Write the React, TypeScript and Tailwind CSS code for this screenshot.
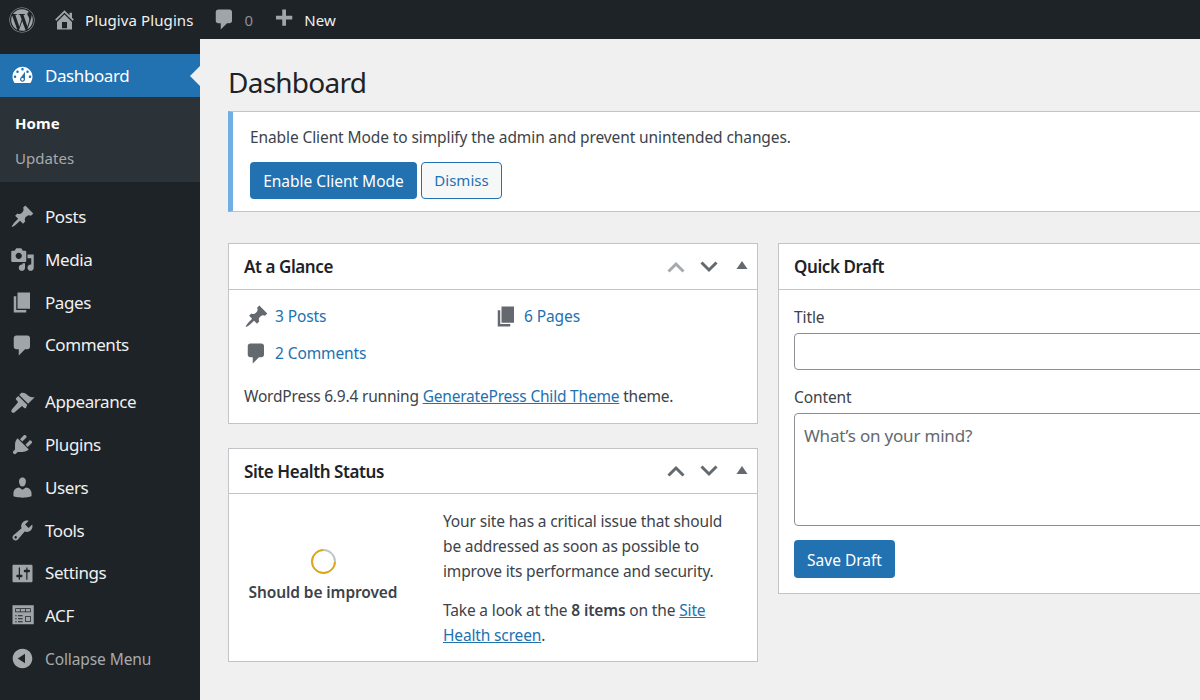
import React from "react";
import { FaWordpress } from "react-icons/fa";

const P = {
  pin: "M10.44 3.02l1.82-1.82 6.36 6.35-1.83 1.82c-1.05-.68-2.48-.57-3.41.36l-.75.75c-.92.93-1.04 2.35-.35 3.41l-1.83 1.82-2.41-2.41-2.8 2.79c-.42.42-3.38 2.71-3.8 2.29s1.86-3.39 2.28-3.81l2.79-2.79L4.1 9.36l1.83-1.82c1.05.69 2.48.57 3.4-.36l.75-.75c.93-.92 1.05-2.35.36-3.41z",
  media: "M13 11V4c0-.55-.45-1-1-1h-1.67L9 1H5L3.67 3H2c-.55 0-1 .45-1 1v7c0 .55.45 1 1 1h10c.55 0 1-.45 1-1zM7 4.5c1.38 0 2.5 1.12 2.5 2.5S8.38 9.5 7 9.5 4.5 8.38 4.5 7 5.62 4.5 7 4.5zM14 6h5v10.5c0 1.38-1.12 2.5-2.5 2.5S14 17.88 14 16.5s1.12-2.5 2.5-2.5c.17 0 .34.02.5.05V9h-3V6zm-4 8.05V13h2v3.5c0 1.38-1.12 2.5-2.5 2.5S7 17.88 7 16.5 8.12 14 9.5 14c.17 0 .34.02.5.05z",
  page: "M6 15V2h10v13H6zm-1 1h8v2H3V5h2v11z",
  comment: "M5 2h9c1.1 0 2 .9 2 2v7c0 1.1-.9 2-2 2h-2l-5 5v-5H5c-1.1 0-2-.9-2-2V4c0-1.1.9-2 2-2z",
  brush: "M14.48 11.06L7.41 3.99l1.5-1.5c.5-.56 2.3-.47 3.51.32 1.21.8 1.43 1.28 2.91 2.1 1.18.64 2.45 1.26 4.45.85zM13.77 11.77L6.7 4.7 4.93 6.47c-.39.39-.39 1.02 0 1.41l1.06 1.06c.39.39.39 1.03 0 1.42l-4.2 4.9c-.9 1-.95 1.9-.3 2.55s1.6.6 2.5-.3l4.9-4.2c.39-.39 1.03-.39 1.42 0l1.06 1.06c.39.39 1.02.39 1.41 0z",
  plug: "M13.11 4.36L9.87 7.6 8 5.73l3.24-3.24c.35-.34 1.05-.2 1.56.32.52.51.66 1.21.31 1.55zm-8 1.77l.91-1.12 9.01 9.01-1.19.84c-.71.71-2.63 1.16-3.82 1.16H6.14L4.9 17.26c-.59.59-1.54.59-2.12 0-.59-.58-.59-1.53 0-2.12l1.24-1.24v-3.88c0-1.13.4-3.19 1.09-3.89zm7.26 3.97l3.24-3.24c.34-.35 1.04-.21 1.55.31.52.51.66 1.21.31 1.55l-3.24 3.25z",
  user: "M10 9.25c-2.27 0-2.73-3.44-2.73-3.44C7 4.02 7.82 2 9.97 2c2.16 0 2.98 2.02 2.71 3.81 0 0-.41 3.44-2.68 3.44zm0 2.57L12.72 10c2.39 0 4.52 2.33 4.52 4.53v2.49s-3.65 1.13-7.24 1.13c-3.65 0-7.24-1.13-7.24-1.13v-2.49c0-2.25 1.94-4.48 4.47-4.48z",
  tools: "M16.68 9.77c-1.34 1.34-3.3 1.67-4.95.99l-5.41 6.52c-.99.99-2.59.99-3.58 0s-.99-2.59 0-3.57l6.52-5.42c-.68-1.65-.35-3.61.99-4.95 1.28-1.28 3.12-1.62 4.72-1.06l-2.89 2.89 2.82 2.82 2.86-2.87c.53 1.58.18 3.39-1.08 4.65zM3.81 16.21c.4.39 1.04.39 1.43 0 .4-.4.4-1.04 0-1.43-.39-.4-1.03-.4-1.43 0-.39.39-.39 1.03 0 1.43z",
  settings: "M18 16V4c0-.55-.45-1-1-1H3c-.55 0-1 .45-1 1v12c0 .55.45 1 1 1h14c.55 0 1-.45 1-1zM8 11h1c.55 0 1 .45 1 1s-.45 1-1 1H8v1.5c0 .28-.22.5-.5.5s-.5-.22-.5-.5V13H6c-.55 0-1-.45-1-1s.45-1 1-1h1V5.5c0-.28.22-.5.5-.5s.5.22.5.5V11zm5-2h-1c-.55 0-1-.45-1-1s.45-1 1-1h1V5.5c0-.28.22-.5.5-.5s.5.22.5.5V7h1c.55 0 1 .45 1 1s-.45 1-1 1h-1v5.5c0 .28-.22.5-.5.5s-.5-.22-.5-.5V9z",
  dash: "M3.76 16h12.48c1.1-1.37 1.76-3.11 1.76-5 0-4.42-3.58-8-8-8s-8 3.58-8 8c0 1.89.66 3.63 1.76 5zM10 4c.55 0 1 .45 1 1s-.45 1-1 1-1-.45-1-1 .45-1 1-1zM6 6c.55 0 1 .45 1 1s-.45 1-1 1-1-.45-1-1 .45-1 1-1zm8 0c.55 0 1 .45 1 1s-.45 1-1 1-1-.45-1-1 .45-1 1-1zm-5.37 5.55L12 7v6c0 1.1-.9 2-2 2s-2-.9-2-2c0-.57.24-1.08.63-1.45zM4 10c.55 0 1 .45 1 1s-.45 1-1 1-1-.45-1-1 .45-1 1-1zm12 0c.55 0 1 .45 1 1s-.45 1-1 1-1-.45-1-1 .45-1 1-1zm-5 3c0-.55-.45-1-1-1s-1 .45-1 1 .45 1 1 1 1-.45 1-1z",
  home: "M16 8.5l1.53 1.53-1.06 1.06L10 4.62l-6.47 6.47-1.06-1.06L10 2.5l4 4v-2h2v4zm-6-2.46l6 5.99V18H4v-5.97zM12 17v-5H8v5h4z",
  collapse: "M10 2.16c4.33 0 7.84 3.51 7.84 7.84s-3.51 7.84-7.84 7.84S2.16 14.33 2.16 10 5.71 2.16 10 2.16zm2 11.72V6.12L6.18 9.97z",
  plus: "M17 7v3h-5v5H9v-5H4V7h5V2h3v5h5z",
  acf: "M2 1.8h17v15.2H2zM4.2 4.2h12.4v3.2H4.2zM4.8 4.8h3.1v2H4.8zM8.5 4.8H12v2H8.5zM12.6 4.8H16v2h-3.4zM4.2 9.8h1.1v.8H4.2zM6.4 9.8h3.7v.8H6.4zM4.2 12.2h1.1v.8H4.2zM6.4 12.2h3.7v.8H6.4zM4.2 14.6h1.1v.8H4.2zM6.4 14.6h3.7v.8H6.4zM12.2 10.4h4.4v4.8h-4.4zM12.8 11H16v3.6h-3.2z",
};

const I = ({ d, className }: { d: string; className?: string }) => (
  <svg viewBox="0 0 20 20" className={className} fill="currentColor" fillRule="evenodd">
    <path d={d} />
  </svg>
);

const menuA = [
  { d: P.pin, t: "Posts" },
  { d: P.media, t: "Media" },
  { d: P.page, t: "Pages" },
  { d: P.comment, t: "Comments" },
];
const menuB = [
  { d: P.brush, t: "Appearance" },
  { d: P.plug, t: "Plugins" },
  { d: P.user, t: "Users" },
  { d: P.tools, t: "Tools" },
  { d: P.settings, t: "Settings" },
  { d: P.acf, t: "ACF" },
];

const MenuRow = ({ d, t }: { d: string; t: string }) => (
  <div className="h-[42.75px] flex items-center text-[#f0f0f1] text-[17px] tracking-[-0.42px]">
    <I d={d} className="w-[25px] h-[25px] ml-[10px] mr-[10px] text-[#a0a5aa] shrink-0" />
    {t}
  </div>
);

const Handles = ({ upLight }: { upLight?: boolean }) => (
  <div className="flex items-center text-[#646970]">
    <svg viewBox="0 0 20 12" className={`w-[20px] h-[12px] ${upLight ? "text-[#a7aaad]" : "text-[#646970]"}`} fill="none" stroke="currentColor" strokeWidth="3">
      <path d="M2.5 10.5L10 3l7.5 7.5" />
    </svg>
    <svg viewBox="0 0 20 12" className="w-[20px] h-[12px] ml-[13px]" fill="none" stroke="currentColor" strokeWidth="3">
      <path d="M2.5 1.5L10 9l7.5-7.5" />
    </svg>
    <svg viewBox="0 0 12 8" className="w-[12px] h-[8px] ml-[17px] mr-[9px] -mt-[3px]" fill="currentColor">
      <path d="M6 0l5.5 8H.5z" />
    </svg>
  </div>
);

const PostboxHead = ({ title, upLight, titleClass }: { title: string; upLight?: boolean; titleClass?: string }) => (
  <div className="flex items-center justify-between border-b border-[#c3c4c7] pl-[15px]">
    <h2 className={`text-[17px] font-semibold text-[#1d2327] tracking-[-0.42px] ${titleClass ?? ""}`}>{title}</h2>
    <Handles upLight={upLight} />
  </div>
);

export default function App() {
  return (
    <div className="w-[1200px] h-[700px] overflow-hidden flex flex-col bg-[#f0f0f1] text-[#3c434a] font-['Noto_Sans',sans-serif]">
      <header className="h-[39px] shrink-0 bg-[#1d2327] flex items-center text-[15px] text-[#f0f0f1] tracking-[0.1px]">
        <FaWordpress className="w-[26px] h-[26px] ml-[9px] text-[#a0a5aa]" />
        <I d={P.home} className="w-[25px] h-[25px] ml-[17px] text-[#a0a5aa]" />
        <span className="ml-[8px] pt-[1px]">Plugiva Plugins</span>
        <I d={P.comment} className="w-[25px] h-[25px] ml-[18px] text-[#a0a5aa]" />
        <span className="ml-[8px] pt-[1px] text-[#8c8f94]">0</span>
        <I d={P.plus} className="w-[25px] h-[25px] ml-[18px] text-[#a0a5aa]" />
        <span className="ml-[8px] pt-[1px]">New</span>
      </header>
      <div className="flex flex-1 min-h-0">
        <aside className="w-[200px] shrink-0 bg-[#1d2327] pt-[15px]">
          <div className="relative h-[43px] bg-[#2271b1] flex items-center text-white text-[17px] tracking-[-0.42px]">
            <I d={P.dash} className="w-[25px] h-[25px] ml-[10px] mr-[10px] text-white shrink-0" />
            Dashboard
            <span className="absolute right-0 top-[12px] w-0 h-0 border-y-[10px] border-y-transparent border-r-[10px] border-r-[#f0f0f1]" />
          </div>
          <div className="h-[85px] bg-[#2c3338] pt-[9px] text-[15px] tracking-[0.05px] pl-[15px]">
            <div className="h-[35px] flex items-center font-bold text-white">Home</div>
            <div className="h-[35px] flex items-center text-[#a7aaad]">Updates</div>
          </div>
          <div className="mt-[13.5px]">
            {menuA.map((m) => <MenuRow key={m.t} {...m} />)}
          </div>
          <div className="mt-[14.25px]">
            {menuB.map((m) => <MenuRow key={m.t} {...m} />)}
          </div>
          <div className="h-[42.75px] flex items-center text-[#a7aaad] text-[15.5px] tracking-[-0.1px]">
            <I d={P.collapse} className="w-[25px] h-[25px] ml-[10px] mr-[10px] text-[#a7aaad] shrink-0" />
            <span className="pt-[2px]">Collapse Menu</span>
          </div>
        </aside>
        <main className="flex-1 min-w-0 pl-[28px] overflow-hidden">
          <h1 className="mt-[23px] text-[28px] leading-[40px] text-[#1d2327] tracking-[-0.75px]">Dashboard</h1>
          <div className="mt-[9px] h-[101px] w-[1000px] bg-white border border-[#c3c4c7] border-l-[5px] border-l-[#72aee6] pl-[17px] pt-[13px] text-[15.5px] tracking-[-0.1px]">
            <p className="leading-[24px]">Enable Client Mode to simplify the admin and prevent unintended changes.</p>
            <div className="mt-[13px] flex gap-[4px]">
              <button className="h-[37px] w-[167px] pt-[2px] rounded-[4px] bg-[#2271b1] text-white text-[15.5px] tracking-normal">Enable Client Mode</button>
              <button className="h-[37px] w-[81px] rounded-[4px] bg-[#f6f7f7] border border-[#2271b1] text-[#2271b1] text-[15px] tracking-normal">Dismiss</button>
            </div>
          </div>
          <div className="mt-[31px] flex items-start gap-[20px] w-[1100px]">
            <div className="w-[530px] shrink-0 flex flex-col gap-[24px]">
              <section className="h-[181px] bg-white border border-[#c3c4c7]">
                <div className="h-[46px] [&>div]:h-full"><PostboxHead title="At a Glance" upLight /></div>
                <div className="pl-[15px] pr-[15px] text-[15.5px] tracking-[-0.1px]">
                  <div className="flex h-[37px] items-center mt-[8px]">
                    <div className="w-[250px] flex items-center text-[#2271b1]">
                      <I d={P.pin} className="w-[25px] h-[25px] text-[#646970] mr-[6px]" />3 Posts
                    </div>
                    <div className="flex items-center text-[#2271b1]">
                      <I d={P.page} className="w-[25px] h-[25px] text-[#646970] mr-[5px]" />6 Pages
                    </div>
                  </div>
                  <div className="flex h-[37px] items-center text-[#2271b1]">
                    <I d={P.comment} className="w-[25px] h-[25px] text-[#646970] mr-[6px]" />2 Comments
                  </div>
                  <p className="mt-[12px] leading-[24px] tracking-[-0.2px]">
                    WordPress 6.9.4 running <a className="text-[#2271b1] underline">GeneratePress Child Theme</a> theme.
                  </p>
                </div>
              </section>
              <section className="h-[214px] bg-white border border-[#c3c4c7]">
                <div className="h-[45px] [&>div]:h-full"><PostboxHead title="Site Health Status" titleClass="pt-[1px]" /></div>
                <div className="flex text-[15.5px] tracking-[-0.1px]">
                  <div className="w-[188px] mr-[26px] shrink-0 flex flex-col items-center pt-[55px]">
                    <div className="w-[25px] h-[25px] rounded-full border-2 border-[#dba617] border-t-[#c3c4c7] rotate-45" />
                    <div className="mt-[6px] font-semibold leading-[24px] whitespace-nowrap">Should be improved</div>
                  </div>
                  <div className="w-[285px] pt-[15px] leading-[25px] tracking-[-0.15px]">
                    <p>Your site has a critical issue that should be addressed as soon as possible to improve its performance and security.</p>
                    <p className="mt-[14px]">Take a look at the <b className="font-semibold">8 items</b> on the <a className="text-[#2271b1] underline">Site Health screen</a>.</p>
                  </div>
                </div>
              </section>
            </div>
            <section className="w-[530px] shrink-0 h-[351px] bg-white border border-[#c3c4c7]">
              <div className="h-[46px] [&>div]:h-full"><PostboxHead title="Quick Draft" /></div>
              <div className="pl-[15px] pr-[15px] text-[15.5px] tracking-[-0.1px]">
                <div className="mt-[15px] leading-[24px]">Title</div>
                <div className="mt-[4px] h-[37px] w-full rounded-[4px] border border-[#8c8f94] bg-white" />
                <div className="mt-[15px] leading-[24px]">Content</div>
                <div className="mt-[4px] h-[113px] w-full rounded-[4px] border border-[#8c8f94] bg-white pl-[9px] pt-[7px] text-[17px] tracking-[-0.2px] text-[#646970] leading-[30px]">What’s on your mind?</div>
                <button className="mt-[14px] h-[38px] w-[101px] pt-[3px] rounded-[4px] bg-[#2271b1] text-white text-[15.5px] tracking-normal">Save Draft</button>
              </div>
            </section>
          </div>
        </main>
      </div>
    </div>
  );
}
